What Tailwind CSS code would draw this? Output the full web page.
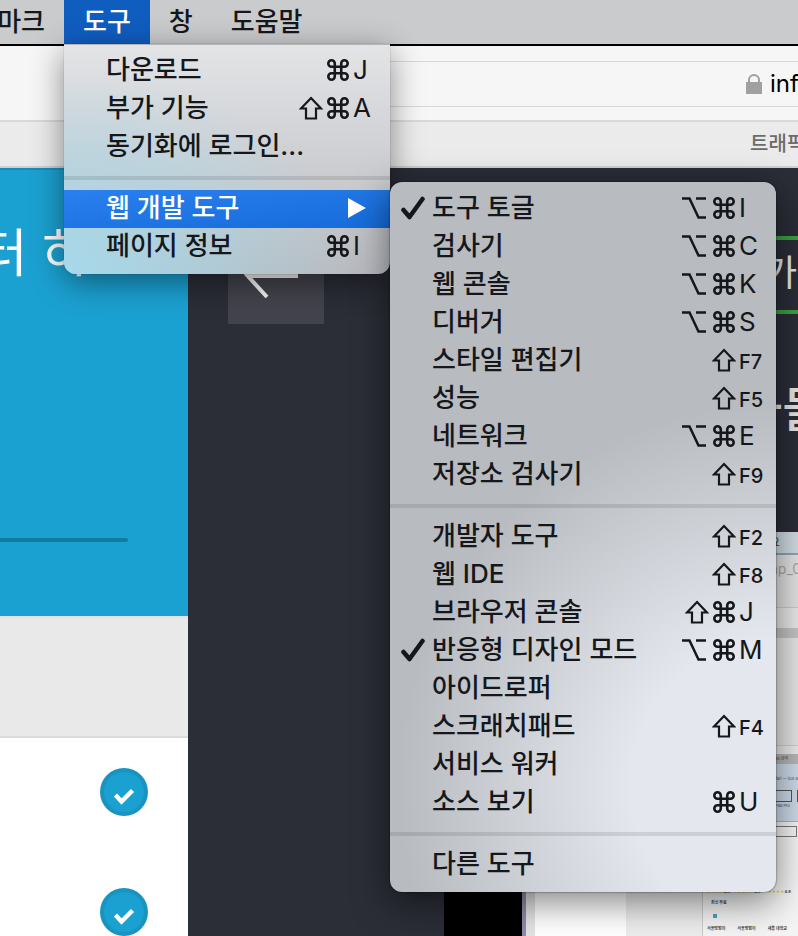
<!DOCTYPE html>
<html lang="ko">
<head>
<meta charset="utf-8">
<meta name="viewport" content="width=device-width, initial-scale=1">
<title>도구</title>
<script src="https://cdn.jsdelivr.net/npm/@tailwindcss/browser@4"></script>
</head>
<body class="relative flex h-screen flex-col overflow-hidden bg-[#2b2d37] font-['Inter','Noto_Sans_CJK_KR',sans-serif] text-[26px] leading-[38px] text-[#15171a]">
<svg class="hidden">
  <symbol id="cmd" viewBox="-1 -1 26 26"><path d="M8.5 8.5V5a3.5 3.5 0 1 0-3.5 3.5h14A3.5 3.5 0 1 0 15.500 5v14a3.500 3.500 0 1 0 3.500-3.500H5A3.500 3.500 0 1 0 8.500 19V8.500" fill="none" stroke="currentColor" stroke-width="2.800"/></symbol>
  <symbol id="shift" viewBox="0 0 24 24"><path d="M12 2 22 12.500H17V22.500H7V12.500H2Z" fill="none" stroke="currentColor" stroke-width="2.200"/></symbol>
  <symbol id="opt" viewBox="0 0 24 24"><path d="M0 2.500H7.500L16.500 21.500H24M14 2.500H24" fill="none" stroke="currentColor" stroke-width="2.500"/></symbol>
  <symbol id="check" viewBox="0 0 24 24"><path d="M2.500 14 8.500 21 21.500 3" fill="none" stroke="currentColor" stroke-width="4.500" stroke-linecap="round" stroke-linejoin="round"/></symbol>
  <symbol id="done" viewBox="0 0 48 48"><circle cx="24" cy="24" r="24" fill="#1993c0"/><circle cx="24" cy="24" r="20" fill="#1ba1d1"/><path d="M15.500 27 21.500 33.500 32.500 22.500" fill="none" stroke="#fff" stroke-width="4.500"/></symbol>
</svg>

<nav class="flex h-[46px] shrink-0 border-b-2 border-black bg-[#cacbcd] font-medium" aria-label="메뉴 막대">
  <button class="flex h-11 w-16 items-center justify-end overflow-hidden whitespace-nowrap pr-[19px]">북마크</button>
  <button class="h-11 bg-[#105dc0] px-[19px] text-white">도구</button>
  <button class="h-11 px-[19px]">창</button>
  <button class="h-11 px-[19px]">도움말</button>
</nav>

<header class="shrink-0">
  <div class="flex h-[76px] items-center border-b-2 border-[#d9d9d9] bg-[#f6f6f6]">
    <div class="ml-[128px] mt-[2px] flex h-[46px] flex-1 items-center justify-end gap-2 overflow-hidden border-y border-[#d6d6d6]">
      <svg class="h-5 w-4 shrink-0" viewBox="0 0 16 20" aria-hidden="true"><path d="M3 9V6a5 5 0 0 1 10 0v3" fill="none" stroke="#a0a0a0" stroke-width="2"/><rect y="8" width="16" height="12" fill="#a0a0a0"/></svg>
      <span class="w-7 text-2xl whitespace-nowrap text-black">inflearn</span>
    </div>
  </div>
  <div class="flex h-[46px] items-center justify-end overflow-hidden border-b-2 border-[#cfcfcf] bg-[#ebebeb] text-xl font-medium text-[#6b6b6b]">
    <span class="w-12 whitespace-nowrap">트래픽</span>
  </div>
</header>

<main class="flex min-h-0 flex-1">
  <aside class="flex w-[188px] shrink-0 flex-col overflow-hidden bg-white">
    <section class="flex h-[448px] shrink-0 flex-col border-t-2 border-[#178db8] bg-[#1ba1d1]">
      <h1 class="flex h-[168px] items-center justify-end pr-[98px] text-[52px] font-normal whitespace-nowrap text-white">터 하</h1>
      <div class="mr-[60px] mt-[200px] h-1 rounded-r-sm bg-[#147ba0]"></div>
    </section>
    <div class="h-[122px] shrink-0 border-y-2 border-t-[#e2e2e2] border-b-[#dcdcdc] bg-[#e9e9e9]"></div>
    <ul class="flex flex-col items-end gap-[72px] pt-[30px] pr-10">
      <li><svg class="block size-12" role="img" aria-label="완료"><use href="#done"/></svg></li>
      <li><svg class="block size-12" role="img" aria-label="완료"><use href="#done"/></svg></li>
    </ul>
  </aside>

  <section class="flex min-w-0 flex-1 flex-col">
    <div class="flex h-[364px] shrink-0 items-start justify-between">
      <button class="mt-[60px] ml-10 flex size-24 items-center justify-center bg-[#42434c]" aria-label="뒤로">
        <svg class="size-16" viewBox="0 0 64 64"><path d="M54 32H4M24 8 2 30 23 53" fill="none" stroke="#f2f2f2" stroke-width="4"/></svg>
      </button>
      <div class="flex w-14 flex-col overflow-hidden text-[#e4e4e4]">
        <div class="mt-[68px] flex h-[78px] items-center justify-end border-y-4 border-[#3aa23f] pb-1 text-4xl font-normal"><span class="mr-px">가</span></div>
        <div class="mt-[68px] flex h-14 items-center text-5xl font-medium whitespace-nowrap"><span class="-ml-1">자들</span></div>
      </div>
    </div>

    <div class="ml-[256px] flex min-h-0 flex-1 overflow-hidden bg-[#f4f4f4] text-[4px] leading-[6px] text-[#444]">
      <div class="w-[78px] shrink-0 bg-black"></div>
      <div class="w-1 shrink-0 bg-[#8e8ca6]"></div>
      <div class="w-[9px] shrink-0 bg-[#e3e3e3]"></div>
      <div class="w-[91px] shrink-0 bg-white"></div>
      <div class="w-[77px] shrink-0 border-r border-[#ccc] bg-[#ededed]"></div>
      <div class="flex min-w-0 flex-1 flex-col">
        <div class="flex h-[23px] shrink-0 items-center justify-end border-b-2 border-[#8fa3b2] bg-[#cfdae1] pr-[18px] text-xs">요</div>
        <div class="flex h-[53px] shrink-0 justify-end overflow-hidden border-b border-[#c9c9c9] bg-[#e1e1e1] pt-1 text-sm text-[#a5a5a5]"><span class="w-7">ap_0</span></div>
        <div class="h-5 shrink-0 bg-[#e7e7e7]"></div>
        <div class="h-[10px] shrink-0 bg-[#c2c2c2]"></div>
        <div class="h-[108px] shrink-0 border-b border-[#ccc] bg-[#e4e4e4]"></div>
        <div class="h-2 shrink-0 bg-[#e9e9e9]"></div>
        <div class="h-[10px] shrink-0 bg-[#b5b5b5] pt-[2px] pr-[10px] text-right">apps 검색</div>
        <div class="flex h-[58px] shrink-0 flex-col overflow-hidden border-b border-[#9fb3cc] bg-[#ccd9e8] pt-3">
          <span class="self-end whitespace-nowrap">Safari — iOS 9</span>
          <div class="mt-2 flex justify-end gap-[5px]">
            <div class="flex flex-col items-center"><div class="h-3 w-5 border border-[#555]"></div><span class="mt-px">iPad Pro</span></div>
            <div class="h-3 w-px bg-[#555]"></div>
          </div>
        </div>
        <div class="mt-1 mr-px h-[11px] shrink-0 border border-[#777] bg-[#f4f4f4]"></div>
        <div class="mt-[52px] grid grid-cols-3 pl-1">
          <span class="whitespace-nowrap text-[#e0d21c]">★★★★<b class="text-[#444]">4.8</b></span>
          <span class="whitespace-nowrap text-[#e0d21c]">★★★★<b class="text-[#444]">4.8</b></span>
          <span class="whitespace-nowrap text-[#e0d21c]">★★★★<b class="text-[#444]">4.8</b></span>
        </div>
        <b class="mt-[5px] pl-2">최신 무료</b>
        <div class="mt-2 ml-[10px] size-1 shrink-0 bg-[#4d9fc4]"></div>
        <div class="mt-2 grid grid-cols-3 pl-1 font-bold whitespace-nowrap"><span>서울방법이</span><span>서울방법이</span><span>새롬 대학교</span></div>
      </div>
    </div>
  </section>
</main>

<div role="menu" aria-label="도구" class="absolute top-11 left-16 flex w-[326px] flex-col rounded-b-xl border-t border-[#b4b5b7] bg-[radial-gradient(ellipse_90%_90%_at_0%_100%,#a6daec,#a6daec00),linear-gradient(to_bottom,#e3e4e6,#b9babf)] pt-[7px] pb-2 font-medium shadow-[0_8px_32px_rgba(0,0,0,0.45),0_0_1px_rgba(0,0,0,0.6)]">
  <button role="menuitem" class="flex h-[38px] items-center pb-[2px] pl-[42px]"><span class="flex-1 text-left">다운로드</span><svg class="mr-[3px] size-6"><use href="#cmd"/></svg><span class="w-[37px] text-left font-normal">J</span></button>
  <button role="menuitem" class="flex h-[38px] items-center pb-[2px] pl-[42px]"><span class="flex-1 text-left">부가 기능</span><svg class="mr-[3px] size-6"><use href="#shift"/></svg><svg class="mr-[3px] size-6"><use href="#cmd"/></svg><span class="w-[37px] text-left font-normal">A</span></button>
  <button role="menuitem" class="flex h-[38px] items-center pb-[2px] pl-[42px]">동기화에 로그인...</button>
  <hr class="my-[10px] h-1 border-0 bg-black/10">
  <button role="menuitem" class="flex h-[38px] items-center bg-linear-to-br from-[#2a80ee] to-[#146bd9] pb-[2px] pl-[42px] text-white"><span class="flex-1 text-left">웹 개발 도구</span><svg class="mr-6 h-5 w-[18px]" viewBox="0 0 18 20"><path d="M0 0 18 10 0 20Z" fill="currentColor"/></svg></button>
  <button role="menuitem" class="flex h-[38px] items-center pb-[2px] pl-[42px]"><span class="flex-1 text-left">페이지 정보</span><svg class="mr-[3px] size-6"><use href="#cmd"/></svg><span class="w-[37px] text-left font-normal">I</span></button>
</div>

<div role="menu" aria-label="웹 개발 도구" class="absolute top-[182px] left-[390px] flex w-[386px] flex-col rounded-xl bg-[#b8bbc0] bg-[radial-gradient(ellipse_98%_54%_at_100%_85%,#e4e8ee_38%,#b8bbc0)] py-2 font-medium shadow-[0_10px_36px_rgba(0,0,0,0.5),0_0_2px_rgba(0,0,0,0.7)]">
  <button role="menuitemcheckbox" aria-checked="true" class="flex h-[38px] items-center pb-[2px] pl-[11px]"><svg class="mr-[7px] size-6"><use href="#check"/></svg><span class="flex-1 text-left">도구 토글</span><svg class="mr-[6px] size-6"><use href="#opt"/></svg><svg class="mr-[3px] size-6"><use href="#cmd"/></svg><span class="w-[37px] text-left font-normal">I</span></button>
  <button role="menuitem" class="flex h-[38px] items-center pb-[2px] pl-[42px]"><span class="flex-1 text-left">검사기</span><svg class="mr-[6px] size-6"><use href="#opt"/></svg><svg class="mr-[3px] size-6"><use href="#cmd"/></svg><span class="w-[37px] text-left font-normal">C</span></button>
  <button role="menuitem" class="flex h-[38px] items-center pb-[2px] pl-[42px]"><span class="flex-1 text-left">웹 콘솔</span><svg class="mr-[6px] size-6"><use href="#opt"/></svg><svg class="mr-[3px] size-6"><use href="#cmd"/></svg><span class="w-[37px] text-left font-normal">K</span></button>
  <button role="menuitem" class="flex h-[38px] items-center pb-[2px] pl-[42px]"><span class="flex-1 text-left">디버거</span><svg class="mr-[6px] size-6"><use href="#opt"/></svg><svg class="mr-[3px] size-6"><use href="#cmd"/></svg><span class="w-[37px] text-left font-normal">S</span></button>
  <button role="menuitem" class="flex h-[38px] items-center pb-[2px] pl-[42px]"><span class="flex-1 text-left">스타일 편집기</span><svg class="mr-[3px] size-6"><use href="#shift"/></svg><span class="w-[37px] pt-1 text-left text-xl">F7</span></button>
  <button role="menuitem" class="flex h-[38px] items-center pb-[2px] pl-[42px]"><span class="flex-1 text-left">성능</span><svg class="mr-[3px] size-6"><use href="#shift"/></svg><span class="w-[37px] pt-1 text-left text-xl">F5</span></button>
  <button role="menuitem" class="flex h-[38px] items-center pb-[2px] pl-[42px]"><span class="flex-1 text-left">네트워크</span><svg class="mr-[6px] size-6"><use href="#opt"/></svg><svg class="mr-[3px] size-6"><use href="#cmd"/></svg><span class="w-[37px] text-left font-normal">E</span></button>
  <button role="menuitem" class="flex h-[38px] items-center pb-[2px] pl-[42px]"><span class="flex-1 text-left">저장소 검사기</span><svg class="mr-[3px] size-6"><use href="#shift"/></svg><span class="w-[37px] pt-1 text-left text-xl">F9</span></button>
  <hr class="my-[10px] h-1 border-0 bg-black/10">
  <button role="menuitem" class="flex h-[38px] items-center pb-[2px] pl-[42px]"><span class="flex-1 text-left">개발자 도구</span><svg class="mr-[3px] size-6"><use href="#shift"/></svg><span class="w-[37px] pt-1 text-left text-xl">F2</span></button>
  <button role="menuitem" class="flex h-[38px] items-center pb-[2px] pl-[42px]"><span class="flex-1 text-left">웹 IDE</span><svg class="mr-[3px] size-6"><use href="#shift"/></svg><span class="w-[37px] pt-1 text-left text-xl">F8</span></button>
  <button role="menuitem" class="flex h-[38px] items-center pb-[2px] pl-[42px]"><span class="flex-1 text-left">브라우저 콘솔</span><svg class="mr-[3px] size-6"><use href="#shift"/></svg><svg class="mr-[3px] size-6"><use href="#cmd"/></svg><span class="w-[37px] text-left font-normal">J</span></button>
  <button role="menuitemcheckbox" aria-checked="true" class="flex h-[38px] items-center pb-[2px] pl-[11px]"><svg class="mr-[7px] size-6"><use href="#check"/></svg><span class="flex-1 text-left">반응형 디자인 모드</span><svg class="mr-[6px] size-6"><use href="#opt"/></svg><svg class="mr-[3px] size-6"><use href="#cmd"/></svg><span class="w-[37px] text-left font-normal">M</span></button>
  <button role="menuitem" class="flex h-[38px] items-center pb-[2px] pl-[42px]">아이드로퍼</button>
  <button role="menuitem" class="flex h-[38px] items-center pb-[2px] pl-[42px]"><span class="flex-1 text-left">스크래치패드</span><svg class="mr-[3px] size-6"><use href="#shift"/></svg><span class="w-[37px] pt-1 text-left text-xl">F4</span></button>
  <button role="menuitem" class="flex h-[38px] items-center pb-[2px] pl-[42px]">서비스 워커</button>
  <button role="menuitem" class="flex h-[38px] items-center pb-[2px] pl-[42px]"><span class="flex-1 text-left">소스 보기</span><svg class="mr-[3px] size-6"><use href="#cmd"/></svg><span class="w-[37px] text-left font-normal">U</span></button>
  <hr class="my-[10px] h-1 border-0 bg-black/10">
  <button role="menuitem" class="flex h-[38px] items-center pb-[2px] pl-[42px]">다른 도구</button>
</div>
</body>
</html>
